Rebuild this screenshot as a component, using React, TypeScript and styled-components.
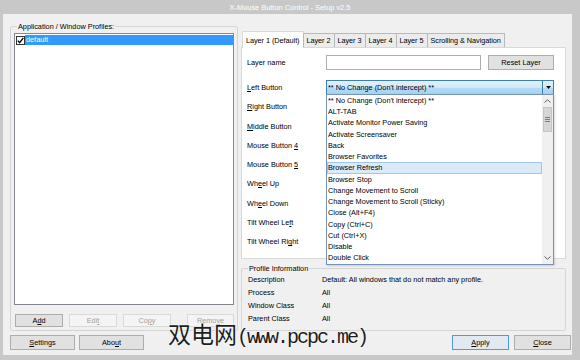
import { Fragment } from "react";
import styled, { createGlobalStyle } from "styled-components";

const GlobalStyle = createGlobalStyle`
  * { box-sizing: border-box; }
  html, body { margin: 0; padding: 0; background: #c8c8c8; }
  body {
    font-family: "Liberation Sans", Arial, sans-serif;
    font-size: 7.3px;
    color: #000;
  }
`;

const Window = styled.div`
  width: 580px;
  height: 360px;
  background: #c8c8c8;
  display: flex;
  flex-direction: column;
  overflow: hidden;
`;

const TitleBar = styled.div`
  height: 14px;
  display: flex;
  align-items: center;
  justify-content: center;
  color: #fff;
  font-size: 7.4px;
`;

const Client = styled.div`
  position: relative;
  flex: 1;
  margin: 0 8px 5px 3px;
  padding: 8px 1px 0 7px;
  background: #f0f0f0;
  display: flex;
  flex-direction: column;
  gap: 4px;
`;

const Main = styled.div`
  height: 309px;
  display: flex;
  gap: 3px;
`;

const Group = styled.fieldset<{ $w: number; $h?: number }>`
  margin: 0;
  padding: 0 3px 3px;
  min-width: 0;
  width: ${(p) => p.$w}px;
  ${(p) => (p.$h ? `height: ${p.$h}px;` : "")}
  border: 1px solid #d5d5d5;
  border-radius: 2px;
  display: flex;
  flex-direction: column;
`;

const InfoGroup = styled(Group)`
  margin-top: 5px;
`;

const Legend = styled.legend`
  margin-left: 3px;
  padding: 0 1px;
  line-height: 9px;
`;

const ProfileList = styled.div`
  flex: 1;
  margin-top: 2px;
  background: #fff;
  border: 1px solid #828790;
  padding: 1px 0 0 1px;
`;

const ProfileItem = styled.div`
  height: 10px;
  display: flex;
  align-items: center;
`;

const CheckBox = styled.span`
  width: 9px;
  height: 9px;
  border: 1px solid #333;
  background: #fff;
  display: flex;
  align-items: center;
  justify-content: center;
`;

const ItemLabel = styled.span<{ $selected?: boolean }>`
  flex: 1;
  height: 10px;
  line-height: 10px;
  padding-left: 1px;
  background: ${(p) => (p.$selected ? "#3399ff" : "transparent")};
  color: ${(p) => (p.$selected ? "#fff" : "#000")};
`;

const ButtonRow = styled.div<{ $h: number; $gap: number }>`
  display: flex;
  height: ${(p) => p.$h}px;
  gap: ${(p) => p.$gap}px;
`;

const ListButtons = styled(ButtonRow)`
  margin-top: 9px;
  padding-left: 1px;
`;

type Variant = "normal" | "disabled" | "default";

const Button = styled.button<{ $w: number; $variant?: Variant; $push?: boolean }>`
  width: ${(p) => p.$w}px;
  height: 100%;
  margin: 0;
  ${(p) => (p.$push ? "margin-left: auto;" : "")}
  padding: 0;
  font-family: inherit;
  font-size: 7.3px;
  line-height: 1;
  border-radius: 0;
  border: 1px solid
    ${(p) =>
      p.$variant === "disabled" ? "#d9d9d9" : p.$variant === "default" ? "#4a9be0" : "#adadad"};
  background: ${(p) =>
    p.$variant === "disabled" ? "#f4f4f4" : p.$variant === "default" ? "#e3e9f0" : "#e1e1e1"};
  color: ${(p) => (p.$variant === "disabled" ? "#a3a3a3" : "#000")};
`;

const U = styled.span`
  text-decoration: underline;
`;

const RightColumn = styled.div`
  width: 325px;
  display: flex;
  flex-direction: column;
  padding-top: 9px;
`;

const TabStrip = styled.div`
  height: 16px;
  display: flex;
  align-items: flex-end;
  padding-left: 1px;
  position: relative;
  z-index: 1;
`;

const Tab = styled.div<{ $active?: boolean }>`
  height: ${(p) => (p.$active ? 17 : 14)}px;
  margin-bottom: ${(p) => (p.$active ? -1 : 0)}px;
  padding: 0 ${(p) => (p.$active ? 3 : 3)}px;
  display: flex;
  align-items: center;
  white-space: nowrap;
  letter-spacing: -0.05px;
  border: 1px solid ${(p) => (p.$active ? "#d9d9d9" : "#b9b9b9")};
  border-bottom: none;
  margin-left: -1px;
  background: ${(p) => (p.$active ? "#fff" : "#ececec")};
  &:first-child {
    margin-left: 0;
  }
`;

const Panel = styled.div`
  height: 212px;
  background: #fff;
  border: 1px solid #d9d9d9;
  padding: 7px 10px 0 5px;
  display: flex;
  flex-direction: column;
`;

const NameRow = styled.div`
  height: 15px;
  display: flex;
  align-items: center;
`;

const FieldLabel = styled.div`
  width: 79px;
`;

const TextInput = styled.div`
  width: 155px;
  height: 100%;
  border: 1px solid #abadb3;
  background: #fff;
  margin-right: 7px;
`;

const FieldGrid = styled.div`
  margin-top: 10px;
  display: grid;
  grid-template-columns: 79px 228px;
  grid-auto-rows: 15px;
  row-gap: 4.3px;
  align-items: center;
`;

const Combo = styled.div<{ $focused?: boolean }>`
  position: relative;
  height: 15px;
  display: flex;
  border: 1px solid ${(p) => (p.$focused ? "#3c7fb1" : "#acacac")};
  background: ${(p) =>
    p.$focused
      ? "linear-gradient(#e3f1fc, #cfe8f9 50%, #b5dcf5 50%, #a3d2f1)"
      : "linear-gradient(#f2f2f2, #e5e5e5)"};
`;

const ComboText = styled.div`
  flex: 1;
  padding-left: 1px;
  display: flex;
  align-items: center;
  white-space: nowrap;
`;

const ComboArrow = styled.div<{ $focused?: boolean }>`
  width: 11px;
  border-left: 1px solid ${(p) => (p.$focused ? "#3c7fb1" : "#acacac")};
  display: flex;
  align-items: center;
  justify-content: center;
`;

const Dropdown = styled.div`
  position: absolute;
  top: 100%;
  left: -1px;
  right: -1px;
  z-index: 5;
  display: flex;
  background: #fff;
  border: 1px solid #7493b8;
  box-shadow: 1px 1px 2px rgba(0, 0, 0, 0.15);
`;

const DropItems = styled.div`
  flex: 1;
`;

const DropItem = styled.div<{ $hot?: boolean }>`
  height: 11.24px;
  line-height: 11.24px;
  padding-left: 1px;
  white-space: nowrap;
  background: ${(p) => (p.$hot ? "#dbeaf9" : "transparent")};
  box-shadow: ${(p) => (p.$hot ? "inset 0 0 0 1px #a3c5ea" : "none")};
`;

const ScrollBar = styled.div`
  width: 11px;
  background: #f0f0f0;
  display: flex;
  flex-direction: column;
`;

const ScrollArrow = styled.div`
  height: 11px;
  display: flex;
  align-items: center;
  justify-content: center;
`;

const ScrollThumb = styled.div`
  height: 25px;
  margin: 1px 1px 0;
  background: #d6d6d6;
  border: 1px solid #c4c4c4;
  display: flex;
  flex-direction: column;
  align-items: center;
  justify-content: center;
  gap: 1px;
`;

const Grip = styled.span`
  width: 5px;
  height: 1px;
  background: #7a7a7a;
`;

const ScrollTrack = styled.div`
  flex: 1;
`;

const InfoGrid = styled.div`
  padding: 0 2px 0 3px;
  display: grid;
  grid-template-columns: 74px 1fr;
  grid-auto-rows: 13px;
  align-items: center;
`;

const BottomBar = styled(ButtonRow)`
  & > :nth-child(2) {
    margin-left: -1px;
  }
`;

const Watermark = styled.div`
  position: absolute;
  left: 165px;
  top: 305px;
  z-index: 10;
  display: flex;
  align-items: baseline;
  color: #1e1e1e;
  text-shadow: 0 0 2px #fff, 0 0 1px #fff;
  white-space: nowrap;
`;

const WatermarkCjk = styled.span`
  font-family: "Noto Sans CJK SC", sans-serif;
  font-size: 23px;
  line-height: 28px;
`;

const WatermarkLatin = styled.span`
  font-family: "Liberation Mono", monospace;
  font-size: 20px;
  letter-spacing: -2px;
`;

const mn = (text: string, i: number) =>
  i < 0 ? (
    text
  ) : (
    <>
      {text.slice(0, i)}
      <U>{text[i]}</U>
      {text.slice(i + 1)}
    </>
  );

const fields: [string, number][] = [
  ["Left Button", 0],
  ["Right Button", 0],
  ["Middle Button", 0],
  ["Mouse Button 4", 13],
  ["Mouse Button 5", 13],
  ["Wheel Up", 2],
  ["Wheel Down", 2],
  ["Tilt Wheel Left", 13],
  ["Tilt Wheel Right", 13],
];

const actions = [
  "** No Change (Don't intercept) **",
  "ALT-TAB",
  "Activate Monitor Power Saving",
  "Activate Screensaver",
  "Back",
  "Browser Favorites",
  "Browser Refresh",
  "Browser Stop",
  "Change Movement to Scroll",
  "Change Movement to Scroll (Sticky)",
  "Close (Alt+F4)",
  "Copy (Ctrl+C)",
  "Cut (Ctrl+X)",
  "Disable",
  "Double Click",
];

const tabs = ["Layer 1 (Default)", "Layer 2", "Layer 3", "Layer 4", "Layer 5", "Scrolling & Navigation"];

const profileInfo: [string, string][] = [
  ["Description", "Default: All windows that do not match any profile."],
  ["Process", "All"],
  ["Window Class", "All"],
  ["Parent Class", "All"],
];

const Arrow = () => (
  <svg width="5" height="3" viewBox="0 0 5 3">
    <path d="M0 0H5L2.5 3Z" fill="#000" />
  </svg>
);

const Chevron = ({ up }: { up?: boolean }) => (
  <svg width="7" height="4" viewBox="0 0 7 4">
    <path
      d={up ? "M0.5 3.5L3.5 0.8L6.5 3.5" : "M0.5 0.5L3.5 3.2L6.5 0.5"}
      fill="none"
      stroke="#606060"
      strokeWidth="1"
    />
  </svg>
);

function App() {
  return (
    <Window>
      <GlobalStyle />
      <TitleBar>X-Mouse Button Control - Setup v2.5</TitleBar>
      <Client>
        <Main>
          <Group $w={228}>
            <Legend>Application / Window Profiles:</Legend>
            <ProfileList>
              <ProfileItem>
                <CheckBox>
                  <svg width="7" height="7" viewBox="0 0 7 7">
                    <path d="M0.8 3.6L2.6 5.6L6.3 0.9" fill="none" stroke="#000" strokeWidth="1.4" />
                  </svg>
                </CheckBox>
                <ItemLabel $selected>default</ItemLabel>
              </ProfileItem>
            </ProfileList>
            <ListButtons $h={13} $gap={6}>
              <Button $w={48}>{mn("Add", 1)}</Button>
              <Button $w={48} $variant="disabled">{mn("Edit", 3)}</Button>
              <Button $w={48} $variant="disabled">{mn("Copy", 2)}</Button>
              <Button $w={47} $variant="disabled" $push>{mn("Remove", 4)}</Button>
            </ListButtons>
          </Group>

          <RightColumn>
            <TabStrip>
              {tabs.map((t, i) => (
                <Tab key={t} $active={i === 0}>{t}</Tab>
              ))}
            </TabStrip>
            <Panel>
              <NameRow>
                <FieldLabel>Layer name</FieldLabel>
                <TextInput />
                <Button $w={66}>Reset Layer</Button>
              </NameRow>
              <FieldGrid>
                {fields.map(([label, u], i) => (
                  <Fragment key={label}>
                    <FieldLabel>{mn(label, u)}</FieldLabel>
                    <Combo $focused={i === 0}>
                      <ComboText>{i === 0 ? actions[0] : ""}</ComboText>
                      <ComboArrow $focused={i === 0}>
                        <Arrow />
                      </ComboArrow>
                      {i === 0 && (
                        <Dropdown>
                          <DropItems>
                            {actions.map((a, j) => (
                              <DropItem key={a} $hot={j === 6}>{a}</DropItem>
                            ))}
                          </DropItems>
                          <ScrollBar>
                            <ScrollArrow>
                              <Chevron up />
                            </ScrollArrow>
                            <ScrollThumb>
                              <Grip />
                              <Grip />
                              <Grip />
                            </ScrollThumb>
                            <ScrollTrack />
                            <ScrollArrow>
                              <Chevron />
                            </ScrollArrow>
                          </ScrollBar>
                        </Dropdown>
                      )}
                    </Combo>
                  </Fragment>
                ))}
              </FieldGrid>
            </Panel>
            <InfoGroup $w={325} $h={67}>
              <Legend>Profile Information</Legend>
              <InfoGrid>
                {profileInfo.map(([k, v]) => (
                  <Fragment key={k}>
                    <span>{k}</span>
                    <span>{v}</span>
                  </Fragment>
                ))}
              </InfoGrid>
            </InfoGroup>
          </RightColumn>
        </Main>

        <BottomBar $h={15} $gap={5}>
          <Button $w={65}>{mn("Settings", 0)}</Button>
          <Button $w={65}>{mn("About", 3)}</Button>
          <Button $w={57} $variant="default" $push>{mn("Apply", 0)}</Button>
          <Button $w={57}>{mn("Close", 0)}</Button>
        </BottomBar>

        <Watermark>
          <WatermarkCjk>双电网</WatermarkCjk>
          <WatermarkLatin>(www.pcpc.me)</WatermarkLatin>
        </Watermark>
      </Client>
    </Window>
  );
}

export default App;
